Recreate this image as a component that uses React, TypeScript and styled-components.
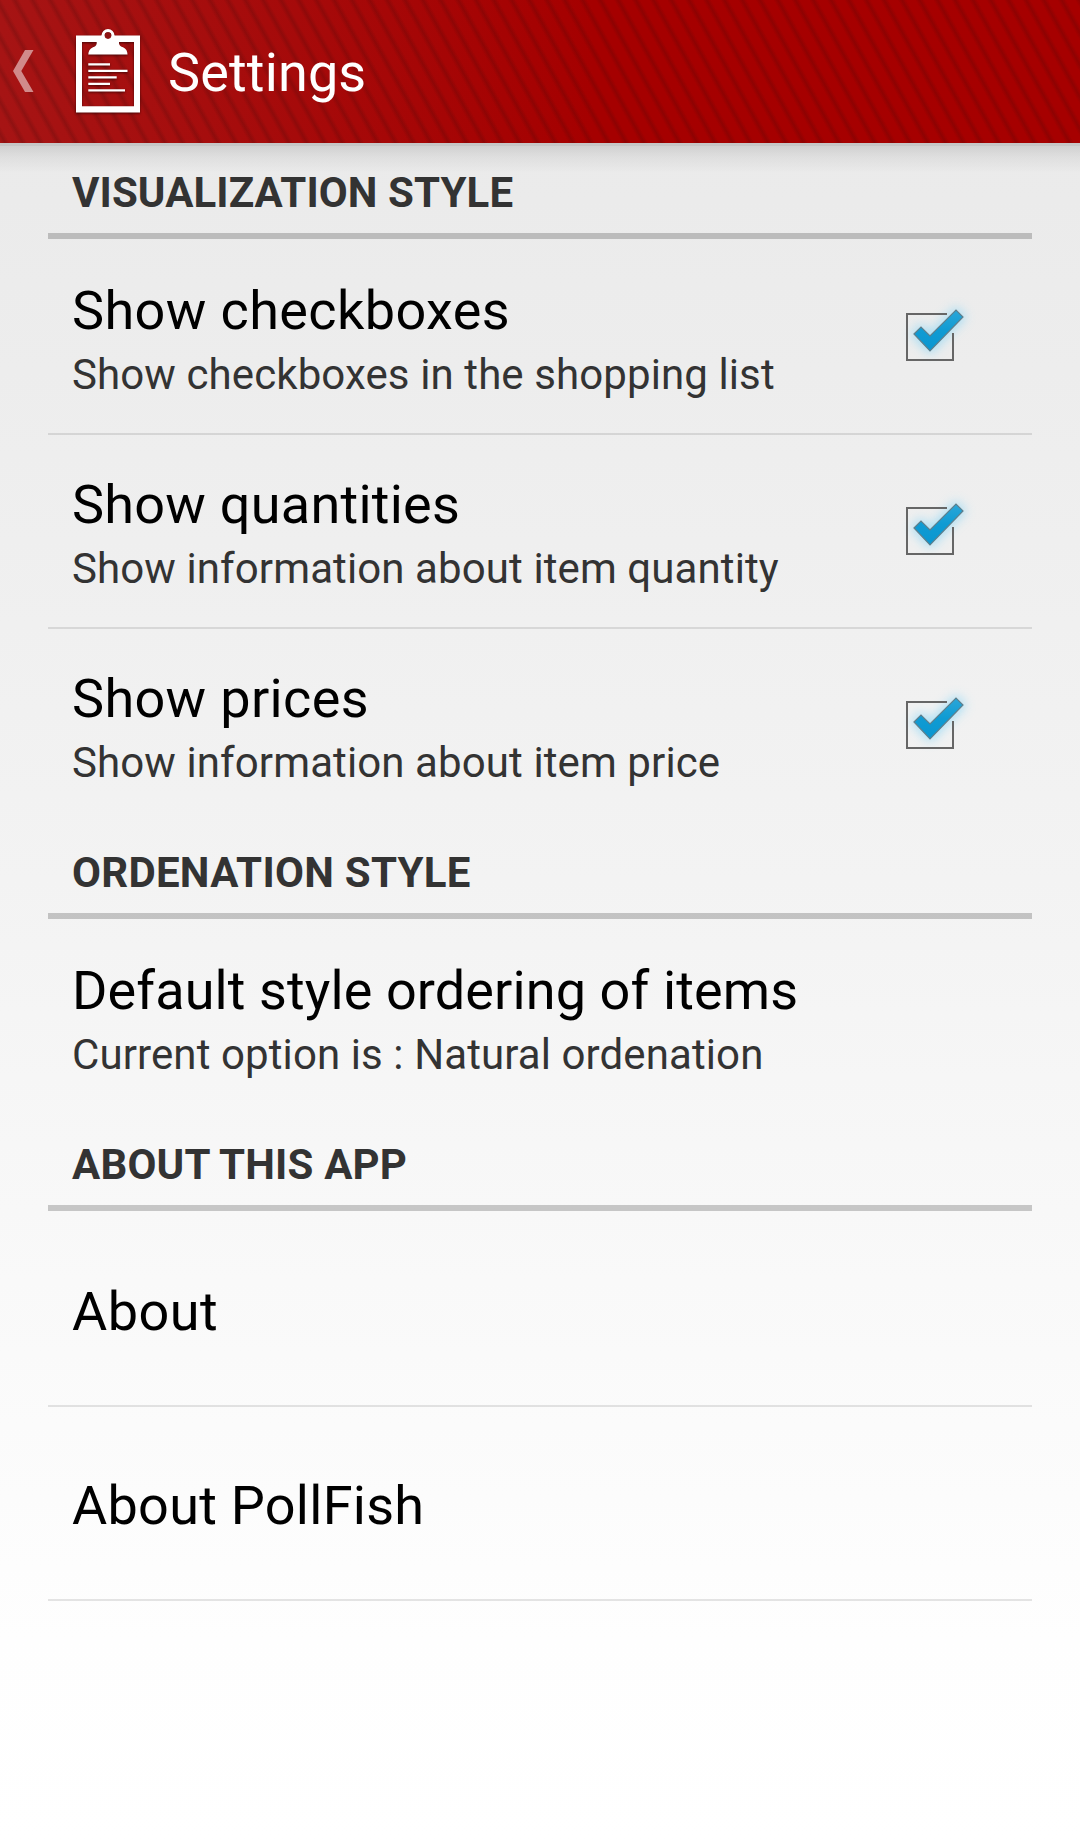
import React from "react";
import styled, { createGlobalStyle } from "styled-components";

const GlobalStyle = createGlobalStyle`
  * { box-sizing: border-box; }
  body { margin: 0; font-family: Roboto, "Noto Sans", sans-serif; }
`;

const Screen = styled.div`
  display: flex;
  flex-direction: column;
  min-height: 1844px;
  background: linear-gradient(#e9e9e9 0, #ebebeb 200px, #f3f3f3 880px, #f8f8f8 1210px, #fefefe 1640px, #ffffff 1844px);
`;

const ActionBar = styled.header`
  display: flex;
  align-items: center;
  height: 143px;
  padding-left: 12px;
  background:
    repeating-linear-gradient(61deg, rgba(60, 10, 10, 0) 0, rgba(60, 10, 10, 0) 0.6px, rgba(60, 10, 10, 0.22) 4.6px, rgba(60, 10, 10, 0) 8.6px, rgba(60, 10, 10, 0) 15.52px),
    linear-gradient(90deg, #a61414, #a50000 55%, #a60000);
`;

const BackIcon = styled.svg`
  width: 22px;
  height: 42px;
  margin-top: -1px;
`;

const AppIcon = styled.svg`
  width: 68px;
  height: 89px;
  margin-left: 40px;
  overflow: visible;
  filter: drop-shadow(0 1px 1px rgba(0, 0, 0, 0.55));
`;

const ScreenTitle = styled.h1`
  margin: 2px 0 0 26px;
  font-size: 54px;
  font-weight: 400;
  line-height: 64px;
  letter-spacing: 0.15px;
  color: #fff;
`;

const BarShadow = styled.div`
  height: 30px;
  margin-bottom: -30px;
  background: linear-gradient(#c6c6c6 0 3px, rgba(0, 0, 0, 0.11) 3px, rgba(0, 0, 0, 0.05) 14px, rgba(0, 0, 0, 0));
`;

const List = styled.main`
  display: flex;
  flex-direction: column;
  padding: 0 48px;
`;

const CategoryHeader = styled.h2<{ $tracking: number }>`
  height: 96px;
  margin: 0;
  padding: 25px 24px 0;
  border-bottom: 6px solid rgba(0, 0, 0, 0.2);
  font-size: 42px;
  font-weight: 700;
  line-height: 49px;
  letter-spacing: ${(p) => p.$tracking}px;
  color: #333;
`;

const Rows = styled.div`
  padding-top: 2px;
`;

const Row = styled.div<{ $divider: boolean }>`
  display: flex;
  align-items: center;
  justify-content: space-between;
  height: 194px;
  padding: 0 56px 0 24px;
  border-bottom: 2px solid ${(p) => (p.$divider ? "rgba(0, 0, 0, 0.1)" : "transparent")};
`;

const Labels = styled.div<{ $single: boolean }>`
  display: flex;
  flex-direction: column;
  padding-top: ${(p) => (p.$single ? 5 : 12)}px;
`;

const RowTitle = styled.span<{ $tracking: number }>`
  font-size: 54px;
  line-height: 64px;
  letter-spacing: ${(p) => p.$tracking}px;
  color: #000;
`;

const Summary = styled.span`
  font-size: 42px;
  line-height: 64px;
  letter-spacing: 0.1px;
  color: #333;
`;

const CheckIcon = styled.svg`
  width: 80px;
  height: 80px;
  overflow: visible;
`;

const TICK = "M18 37L25 30L34 39L60 13L67 20L34 54Z";

function Check() {
  return (
    <CheckIcon viewBox="0 0 80 80">
      <defs>
        <filter id="glow" x="-60%" y="-60%" width="220%" height="220%">
          <feGaussianBlur stdDeviation="5.5" />
        </filter>
        <linearGradient id="tick" x1="0" y1="0" x2="0" y2="1">
          <stop offset="0" stopColor="#2ba6d8" />
          <stop offset="0.5" stopColor="#0f9bd3" />
          <stop offset="1" stopColor="#0a96d0" />
        </linearGradient>
      </defs>
      <path d={TICK} fill="#8fd8f6" stroke="#8fd8f6" strokeWidth="5" opacity="0.75" filter="url(#glow)" />
      <path d="M51 17H11V63H57V36" fill="none" stroke="#666" strokeWidth="2" />
      <path d={TICK} fill="url(#tick)" stroke="#5f7f8c" strokeWidth="1.2" />
    </CheckIcon>
  );
}

function Clipboard() {
  return (
    <AppIcon viewBox="0 0 68 89" fill="#fff">
      <path fillRule="evenodd" d="M2 8.500H66V85.500H2ZM8 15V79.300H60V15Z" />
      <path
        fillRule="evenodd"
        d="M27.500 8.500A6.500 6.500 0 0 1 40.500 8.500L45 14.500V16.500C45.500 19 47 19.500 49 20.200C52 21.500 53.500 24 53.500 27.600H14.300C14.300 24 16 21.500 19 20.200C21 19.500 22.300 19 22.700 16.500V14.500ZM34 5.300A3.300 3.300 0 1 0 34 11.900A3.300 3.300 0 1 0 34 5.300Z"
      />
      <circle cx="34" cy="8.600" r="3.300" fill="#8f1414" />
      <path d="M14.300 36.300H36V38.500H14.300ZM14.300 42.800H53.500V45H14.300ZM14.300 49.200H42.700V51.400H14.300ZM14.300 55.700H36V57.900H14.300ZM14.300 62.200H51V64.400H14.300Z" />
    </AppIcon>
  );
}

interface Preference {
  title: string;
  tracking: number;
  summary?: string;
  checked?: boolean;
}

interface Category {
  name: string;
  tracking: number;
  closed?: boolean;
  items: Preference[];
}

const categories: Category[] = [
  {
    name: "VISUALIZATION STYLE",
    tracking: 0.09,
    items: [
      { title: "Show checkboxes", tracking: 0.39, summary: "Show checkboxes in the shopping list", checked: true },
      { title: "Show quantities", tracking: 0.25, summary: "Show information about item quantity", checked: true },
      { title: "Show prices", tracking: 0.34, summary: "Show information about item price", checked: true },
    ],
  },
  {
    name: "ORDENATION STYLE",
    tracking: 0.27,
    items: [
      {
        title: "Default style ordering of items",
        tracking: 0.11,
        summary: "Current option is : Natural ordenation",
      },
    ],
  },
  {
    name: "ABOUT THIS APP",
    tracking: 0.18,
    closed: true,
    items: [
      { title: "About", tracking: 0.45 },
      { title: "About PollFish", tracking: 0.27 },
    ],
  },
];

export default function App() {
  return (
    <Screen>
      <GlobalStyle />
      <ActionBar>
        <BackIcon viewBox="0 0 22 42">
          <path d="M13 0H21.500L9.300 21L21.500 42H13L1 21Z" fill="#d18a8a" />
        </BackIcon>
        <Clipboard />
        <ScreenTitle>Settings</ScreenTitle>
      </ActionBar>
      <BarShadow />
      <List>
        {categories.map((category) => (
          <React.Fragment key={category.name}>
            <CategoryHeader $tracking={category.tracking}>{category.name}</CategoryHeader>
            <Rows>
              {category.items.map((item, i) => (
                <Row key={item.title} $divider={!!category.closed || i < category.items.length - 1}>
                  <Labels $single={!item.summary}>
                    <RowTitle $tracking={item.tracking}>{item.title}</RowTitle>
                    {item.summary && <Summary>{item.summary}</Summary>}
                  </Labels>
                  {item.checked && <Check />}
                </Row>
              ))}
            </Rows>
          </React.Fragment>
        ))}
      </List>
    </Screen>
  );
}
